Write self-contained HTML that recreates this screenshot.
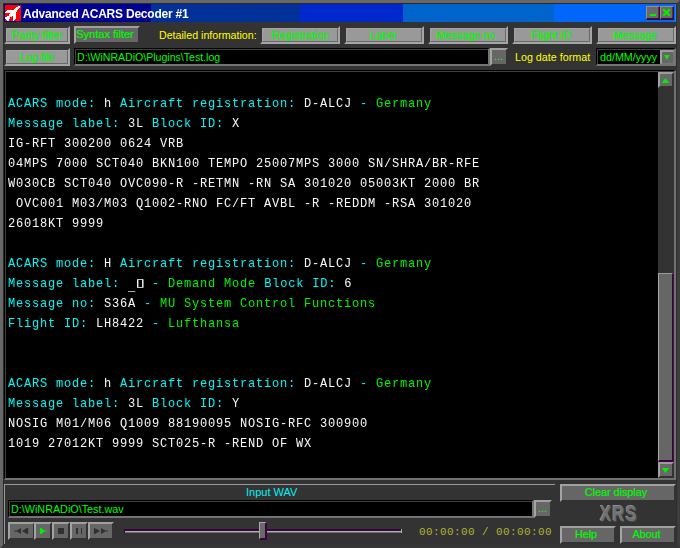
<!DOCTYPE html>
<html>
<head>
<meta charset="utf-8">
<title>Advanced ACARS Decoder #1</title>
<style>
html,body{margin:0;padding:0;background:#333;}
body{width:680px;height:548px;position:relative;overflow:hidden;font-family:"Liberation Sans",sans-serif;font-size:11px;}
div,span,svg,pre{position:absolute;box-sizing:border-box;}
/* window frame */
#frame{left:0;top:0;width:680px;height:548px;border-style:solid;border-width:3px;border-color:#686868 #3d3d3d #363636 #686868;}
#frame2{left:3px;top:3px;width:674px;height:542px;border:1px solid #2a2a2a;border-right-color:#2e2e2e;border-bottom-color:#333;}
#title{left:4px;top:4px;width:672px;height:18px;
background:linear-gradient(to right,#000092 0,#000092 147px,#003098 147px,#003098 296px,#0028cc 296px,#0028cc 399px,#0064cc 399px,#0064cc 550px,#0066fc 550px,#0066fc 672px);}
#title .t{left:19px;top:3px;color:#fff;font-weight:bold;font-size:12px;line-height:14px;white-space:nowrap;letter-spacing:-0.22px;will-change:transform;}
.cap{left:0;top:0;width:14px;height:14px;background:#6a6a6a;border-style:solid;border-width:1px 1px 2px 1px;border-color:#9a9088 #3c0a3c #3c0a3c #9a9088;box-shadow:inset -1px 0 0 #553055;}
/* top-row raised buttons */
.tb{height:18px;border-style:solid;border-width:2px;border-color:transparent #a6a6a6 #a6a6a6 transparent;}
.tb b{position:absolute;box-sizing:border-box;left:0;top:0;right:0;bottom:0;background:#999;border-style:solid;border-width:1px;border-color:#a4a4a4 #686868 #686868 #a4a4a4;}
.tb i,.bb i,.lbl{font-style:normal;white-space:nowrap;line-height:14px;font-size:11px;}
.tb i,.bb i{position:absolute;left:-21px;right:-19px;text-align:center;color:#00fa00;-webkit-text-stroke:0.2px #00fa00;transform:scaleX(.98);}
.tb i{top:0px;-webkit-text-stroke:0.25px #00f000;}
/* bottom buttons */
.bb{background:#666;background-clip:padding-box;border-style:solid;border-width:2px;border-color:#a0a0a0 transparent transparent #a4a4a4;}
.lbl{transform:scaleX(.975);transform-origin:left center;}
.y{color:#ffff00;}
.gr{color:#00ff00;}
.cy{color:#00f4f4;}
.fld{background:#000;border-style:solid;border-width:1px 2px 2px 1px;border-color:#000 #747474 #747474 #000;box-shadow:inset 1px 1px 0 #404040;}
#ta{left:4px;top:70px;width:672px;height:410px;border-style:solid;border-width:1px 2px 2px 1px;border-color:#000 #707070 #707070 #000;box-shadow:inset 1px 1px 0 #404040;background:#333;}
#tb{left:6px;top:72px;width:652px;height:406px;background:#000;}
#tb pre{margin:0;left:2px;top:2px;font-family:"Liberation Mono",monospace;font-size:12px;letter-spacing:0.8px;line-height:20px;color:#fafafa;white-space:pre;will-change:transform;}
.c{position:static;color:#00f8f8;}
.g{position:static;color:#00f400;}
.sbb{width:16px;height:16px;background:#686868;background-clip:padding-box;border-style:solid;border-width:2px;border-color:#9c9c9c transparent transparent #a2a2a2;}
#time{font-family:"Liberation Mono",monospace;font-size:11px;letter-spacing:0.4px;color:#b2b234;white-space:pre;line-height:14px;}
#xrs{font-weight:bold;font-size:22px;line-height:22px;letter-spacing:1.5px;transform:scaleX(.76);color:#707070;white-space:nowrap;transform-origin:left top;text-shadow:-1px -1px 0 #8e8e8e,1px 1px 0 #4a4a4a;}
</style>
</head>
<body>
<div id="frame"></div>
<div id="frame2"></div>
<div id="title">
<svg style="left:1px;top:1px" width="16" height="16" viewBox="0 0 16 16" shape-rendering="crispEdges"><rect width="16" height="16" fill="#ff0000"/><g fill="#fff">
<rect x="13" y="1" width="2" height="1"/>
<rect x="11" y="2" width="4" height="1"/>
<rect x="10" y="3" width="4" height="1"/>
<rect x="9" y="4" width="4" height="1"/>
<rect x="2" y="5" width="10" height="1"/>
<rect x="1" y="6" width="11" height="1"/>
<rect x="0" y="7" width="11" height="1"/>
<rect x="5" y="8" width="6" height="1"/>
<rect x="4" y="9" width="7" height="1"/>
<rect x="4" y="10" width="7" height="1"/>
<rect x="2" y="11" width="5" height="1"/>
<rect x="8" y="11" width="3" height="1"/>
<rect x="0" y="12" width="5" height="1"/>
<rect x="8" y="12" width="3" height="1"/>
<rect x="0" y="13" width="5" height="1"/>
<rect x="8" y="13" width="3" height="1"/>
<rect x="1" y="14" width="3" height="1"/>
<rect x="8" y="14" width="2" height="1"/>
<rect x="2" y="15" width="2" height="1"/>
<rect x="8" y="15" width="1" height="1"/>
</g></svg>
<div class="t">Advanced ACARS Decoder #1</div>
<div style="left:671px;top:0;width:1px;height:18px;background:#0a8cff"></div>
<div class="cap" style="left:642px;top:2px;"><div style="left:3px;top:7px;width:6px;height:2px;background:#00f000"></div></div>
<div class="cap" style="left:656px;top:2px;"><svg style="left:1px;top:1px" width="9" height="9" viewBox="0 0 9 9"><path d="M1.2 1.2 L7.8 7.8 M7.8 1.2 L1.2 7.8" stroke="#00f000" stroke-width="2.1" fill="none"/></svg></div>
</div>

<div class="tb" style="left:4px;top:26px;width:66px;"><b></b><i style="left:-20px;right:-20px">Parity filter</i></div>
<div class="bb" style="left:74px;top:26px;width:66px;height:18px;"><i style="top:-1px;left:-23px;right:-19px;transform:none">Syntax filter</i></div>
<span class="lbl y" style="left:159px;top:28px;transform:scaleX(.968)">Detailed information:</span>
<div class="tb" style="left:260px;top:26px;width:80px;"><b></b><i style="left:-20px;right:-20px">Registration</i></div>
<div class="tb" style="left:344px;top:26px;width:80px;"><b></b><i style="left:-21px;right:-19px">Label</i></div>
<div class="tb" style="left:428px;top:26px;width:80px;"><b></b><i style="left:-21px;right:-19px">Message no.</i></div>
<div class="tb" style="left:512px;top:26px;width:80px;"><b></b><i style="left:-21px;right:-19px">Flight ID</i></div>
<div class="tb" style="left:596px;top:26px;width:80px;"><b></b><i style="left:-21px;right:-19px">Message</i></div>
<div class="tb" style="left:4px;top:48px;width:66px;"><b></b><i style="left:-20px;right:-20px">Log file</i></div>
<div class="fld" style="left:74px;top:48px;width:416px;height:18px;"><span class="lbl gr" style="left:2px;top:1px;transform:scaleX(.96)">D:\WiNRADiO\Plugins\Test.log</span></div>
<div class="bb" style="left:490px;top:48px;width:18px;height:18px;"><span class="gr" style="left:2px;top:-1px;font-size:11px;line-height:14px;">...</span></div>
<span class="lbl y" style="left:515px;top:50px;">Log date format</span>
<div class="fld" style="left:596px;top:48px;width:80px;height:18px;"><span class="lbl gr" style="left:3px;top:1px;">dd/MM/yyyy</span><div class="bb" style="left:63px;top:1px;width:14px;height:14px;border-bottom-width:1px;border-right-width:1px;border-color:#9c9c9c #777 #777 #a2a2a2"><svg style="left:1.6px;top:3px" width="8" height="6" viewBox="0 0 8 6"><path d="M0 0 H5.6 L2.8 5 Z" fill="#00f000"/></svg></div></div>
<div id="ta"></div><div id="tb"><pre>

<span class="c">ACARS mode:</span> h <span class="c">Aircraft registration:</span> D-ALCJ <span class="c">-</span> <span class="g">Germany</span>
<span class="c">Message label:</span> 3L <span class="c">Block ID:</span> X
IG-RFT 300200 0624 VRB
04MPS 7000 SCT040 BKN100 TEMPO 25007MPS 3000 SN/SHRA/BR-RFE
W030CB SCT040 OVC090-R -RETMN -RN SA 301020 05003KT 2000 BR
 OVC001 M03/M03 Q1002-RNO FC/FT AVBL -R -REDDM -RSA 301020
26018KT 9999

<span class="c">ACARS mode:</span> H <span class="c">Aircraft registration:</span> D-ALCJ <span class="c">-</span> <span class="g">Germany</span>
<span class="c">Message label:</span> <span style="position:relative;top:3px">_</span><span id="box" style="position:relative;display:inline-block;width:8px;height:10px;vertical-align:-2px;letter-spacing:0"><span style="left:0;top:-4px;width:8px;text-align:center;font-family:'DejaVu Sans Mono','DejaVu Sans',monospace;font-size:14px;line-height:14px;transform:scaleX(1.7)">&#9647;</span></span> <span class="c">-</span> <span class="g">Demand Mode</span> <span class="c">Block ID:</span> 6
<span class="c">Message no:</span> S36A <span class="c">-</span> <span class="g">MU System Control Functions</span>
<span class="c">Flight ID:</span> LH8422 <span class="c">-</span> <span class="g">Lufthansa</span>


<span class="c">ACARS mode:</span> h <span class="c">Aircraft registration:</span> D-ALCJ <span class="c">-</span> <span class="g">Germany</span>
<span class="c">Message label:</span> 3L <span class="c">Block ID:</span> Y
NOSIG M01/M06 Q1009 88190095 NOSIG-RFC 300900
1019 27012KT 9999 SCT025-R -REND OF WX</pre></div>

<div class="sbb" style="left:658px;top:72px;"><svg style="left:1px;top:4px" width="9" height="6" viewBox="0 0 9 6"><path d="M4.5 0 L8.2 5 H0.8 Z" fill="#00f000"/></svg></div>
<div style="left:658px;top:273px;width:15px;height:189px;background:#666;border-style:solid;border-width:1px 1px 2px 1px;border-color:#9c9c9c #400040 #400040 #aaa;box-shadow:1px 0 0 #381c38;"></div>
<div class="sbb" style="left:658px;top:462px;"><svg style="left:1px;top:4px" width="9" height="6" viewBox="0 0 9 6"><path d="M0.8 0 H8.2 L4.5 5 Z" fill="#00f000"/></svg></div>
<div style="left:4px;top:484px;width:551px;height:60px;border-style:solid;border-width:1px 0 0 1px;border-color:#9a9a9a;"></div>
<span class="lbl cy" style="left:246px;top:485px;font-size:11px;transform:none">Input WAV</span>
<div class="fld" style="left:8px;top:500px;width:526px;height:18px;"><span class="lbl gr" style="left:2px;top:1px;transform:scaleX(.98)">D:\WiNRADiO\Test.wav</span></div>
<div class="bb" style="left:534px;top:500px;width:18px;height:18px;"><span class="gr" style="left:2px;top:-1px;font-size:11px;line-height:14px;">...</span></div>
<div class="bb" style="left:8px;top:522px;width:27px;height:18px;"><svg style="left:4px;top:4px" width="16" height="6" viewBox="0 0 16 6"><path d="M0 2.5 H3 V3.5 H0 Z M2 3 L7 0 V6 Z M8 3 L13 0 V6 Z M13 0 H14.2 V6 H13 Z" fill="#303030"/></svg></div>
<div class="bb" style="left:34px;top:522px;width:18px;height:18px;"><svg style="left:4px;top:4px" width="10" height="6" viewBox="0 0 10 6"><path d="M0 0 H1.6 V6 H0 Z M1.5 0.2 L5 3 L1.5 5.8 Z M4 2.5 H6.6 V3.5 H4 Z" fill="#00f000"/></svg></div>
<div class="bb" style="left:52px;top:522px;width:18px;height:18px;"><div style="left:4px;top:4px;width:6px;height:6px;background:#303030"></div></div>
<div class="bb" style="left:70px;top:522px;width:18px;height:18px;"><div style="left:4px;top:4px;width:1.5px;height:6px;background:#303030"></div><div style="left:8.5px;top:4px;width:1.5px;height:6px;background:#303030"></div></div>
<div class="bb" style="left:88px;top:522px;width:26px;height:18px;"><svg style="left:4px;top:4px" width="16" height="6" viewBox="0 0 16 6"><path d="M0 0 H1.2 V6 H0 Z M1 0 L6 3 L1 6 Z M7 0 L12 3 L7 6 Z M11 2.5 H14 V3.5 H11 Z" fill="#303030"/></svg></div>
<div style="left:124px;top:529px;width:278px;height:4px;background:linear-gradient(to bottom,#400040 0,#400040 2px,#b0b0b0 2px,#b0b0b0 3px,#6c6c6c 3px);border-left:1px solid #400040;border-right:1px solid #b0b0b0;"></div>
<div style="left:259px;top:522px;width:8px;height:18px;background:#6a6a6a;border-style:solid;border-width:1px 2px 2px 1px;border-color:#aaa #400040 #400040 #aaa;"></div>
<span id="time" style="left:419px;top:525px;">00:00:00 / 00:00:00</span>
<div class="bb" style="left:560px;top:484px;width:116px;height:18px;"><i style="top:-1px;left:-23px">Clear display</i></div>
<span id="xrs" style="left:600px;top:503px;">XRS</span>
<div class="bb" style="left:560px;top:526px;width:56px;height:18px;"><i style="top:-1px;left:-23px">Help</i></div>
<div class="bb" style="left:620px;top:526px;width:56px;height:18px;"><i style="top:-1px;left:-22px">About</i></div>
</body>
</html>
